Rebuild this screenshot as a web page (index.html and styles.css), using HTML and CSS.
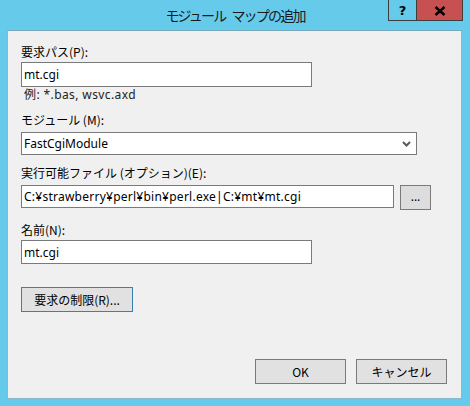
FILE: index.html
```html
<!DOCTYPE html>
<html lang="ja">
<head>
<meta charset="utf-8">
<title>モジュール マップの追加</title>
<link rel="stylesheet" href="styles.css">
</head>
<body>
<div class="window">
  <div class="titlebar">
    <div class="spacer"></div>
    <div class="title"><span>モジュール</span><span class="word">マップの追加</span></div>
    <div class="controls">
      <div class="ctl help">?</div>
      <div class="ctl close">
        <svg width="12" height="10" viewBox="0 0 12 10"><path d="M1.5 1 L10.5 9 M10.5 1 L1.5 9" stroke="#000" stroke-width="2.4" fill="none"/></svg>
      </div>
    </div>
  </div>
  <div class="client">
    <div class="label first">要求パス(P):</div>
    <div class="field w-short h25">mt.cgi</div>
    <div class="hint">例: *.bas, wsvc.axd</div>

    <div class="label gap9">モジュール (M):</div>
    <div class="field select h23">
      <span>FastCgiModule</span>
      <svg width="9" height="6" viewBox="0 0 9 6"><path d="M1 1 L4.5 4.5 L8 1" stroke="#5a5a5a" stroke-width="2" fill="none"/></svg>
    </div>

    <div class="label gap10">実行可能ファイル (オプション)(E):</div>
    <div class="exe-row">
      <div class="field exe h23">C:¥strawberry¥perl¥bin¥perl.exe|C:¥mt¥mt.cgi</div>
      <div class="btn browse">...</div>
    </div>

    <div class="label gap12">名前(N):</div>
    <div class="field w-short h24">mt.cgi</div>

    <div class="btn limits">要求の制限(R)...</div>

    <div class="footer">
      <div class="btn action">OK</div>
      <div class="btn action">キャンセル</div>
    </div>
  </div>
</div>
</body>
</html>
```

FILE: styles.css
```css
* { box-sizing: border-box; }
html, body {
  margin: 0;
  padding: 0;
  width: 470px;
  height: 406px;
  overflow: hidden;
  background: #66cbea;
}
body {
  font-family: "Noto Sans", "Noto Sans CJK JP", sans-serif;
  font-size: 12px;
  color: #000;
}
.window {
  width: 470px;
  height: 406px;
  display: flex;
  flex-direction: column;
}
.titlebar {
  height: 30px;
  display: grid;
  grid-template-columns: 1fr auto 1fr;
  align-items: start;
}
.title {
  font-family: "Noto Sans CJK JP", sans-serif;
  font-size: 14px;
  letter-spacing: -1.8px;
  line-height: 16px;
  padding-top: 7px;
  color: #1a1a1a;
  display: flex;
  white-space: nowrap;
}
.title .word { margin-left: 6px; }
.controls {
  justify-self: end;
  display: flex;
  margin-right: 7px;
}
.ctl {
  height: 21px;
  border: 1px solid #3d3d3d;
  border-top: none;
  display: flex;
  align-items: center;
  justify-content: center;
}
.help {
  width: 29px;
  background: #66cbea;
  font-family: "DejaVu Sans", sans-serif;
  font-weight: bold;
  font-size: 13px;
  color: #000;
  padding-top: 1px;
}
.close {
  width: 47px;
  margin-left: -1px;
  background: #c75050;
  padding-top: 2px;
}
.client {
  margin: 0 8px 7px 7px;
  flex: 1;
  background: #f0f0f0;
  border: 1px solid #8ab9cc;
  border-top-color: #7aa8bb;
  padding: 0 14px 14px 13px;
  display: flex;
  flex-direction: column;
  align-items: flex-start;
}
.label {
  font-family: "Noto Sans CJK JP", sans-serif;
  line-height: 16px;
  height: 16px;
  margin-bottom: 2px;
}
.label.first { margin-top: 13px; }
.label.gap9 { margin-top: 9px; margin-bottom: 4px; }
.label.gap10 { margin-top: 10px; margin-bottom: 4px; }
.label.gap12 { margin-top: 12px; margin-bottom: 2px; }
.field {
  background: #fff;
  border: 1px solid #7a7a7a;
  padding: 0 2px;
  display: flex;
  align-items: center;
  white-space: nowrap;
}
.w-short { width: 291px; }
.h25 { height: 25px; }
.h24 { height: 24px; }
.h23 { height: 23px; }
.hint {
  line-height: 16px;
  height: 16px;
  color: #222;
  padding-left: 3px;
  letter-spacing: 0.4px;
}
.select {
  width: 396px;
  justify-content: space-between;
  padding-right: 5px;
}
.exe-row {
  display: flex;
  gap: 6px;
  align-items: flex-start;
}
.exe {
  width: 373px;
  letter-spacing: 0.25px;
}
.btn {
  background: #e1e1e1;
  border: 1px solid #7a7a7a;
  display: flex;
  align-items: center;
  justify-content: center;
  font-family: "Noto Sans", "Noto Sans CJK JP", sans-serif;
}
.browse {
  width: 31px;
  height: 25px;
  background: #dddddd;
  padding-bottom: 3px;
}
.limits {
  margin-top: 23px;
  width: 112px;
  height: 25px;
  border-color: #3c7fb1;
  font-family: "Noto Sans CJK JP", sans-serif;
}
.footer {
  margin-top: auto;
  align-self: flex-end;
  display: flex;
  gap: 10px;
}
.action {
  width: 91px;
  height: 25px;
  font-family: "Noto Sans CJK JP", sans-serif;
}
```
